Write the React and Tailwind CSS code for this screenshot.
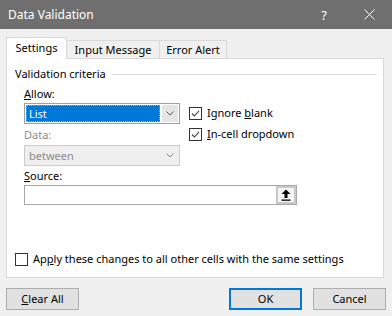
import React from "react";

function Check({ checked }) {
  return (
    <span className="flex h-[13px] w-[13px] items-center justify-center border border-[#333333] bg-white">
      {checked && (
        <svg viewBox="0 0 11 11" className="h-[11px] w-[11px]">
          <path d="M2 5.5 L4.5 8 L9 2.8" fill="none" stroke="#444444" strokeWidth="1.1" />
        </svg>
      )}
    </span>
  );
}

function Chevron({ color = "#555555" }) {
  return (
    <svg viewBox="0 0 8 5" className="h-[5px] w-[8px]">
      <path d="M0.5 0.5 L4 4 L7.5 0.5" fill="none" stroke={color} strokeWidth="1" />
    </svg>
  );
}

function Button({ children, primary }) {
  return (
    <div
      className={
        "flex h-[22px] w-[73px] items-center justify-center bg-[#e1e1e1] " +
        (primary ? "border-2 border-[#0078d7]" : "border border-[#adadad]")
      }
    >
      {children}
    </div>
  );
}

export default function App() {
  return (
    <div
      className="flex h-[316px] w-[392px] flex-col bg-[#f0f0f0] text-[11px] leading-[16px] text-black"
      style={{ fontFamily: '"Segoe UI", "Noto Sans", sans-serif' }}
    >
      {/* Title bar */}
      <div className="flex h-[29px] items-center bg-[#6f6f6f] pl-[8px] text-[12px] text-white">
        <span className="flex-1">Data Validation</span>
        <span className="mr-[37px] text-[13px]">?</span>
        <svg viewBox="0 0 11 11" className="mr-[17px] h-[11px] w-[11px]">
          <path d="M0.5 0.5 L10.5 10.5 M10.5 0.5 L0.5 10.5" stroke="#ffffff" strokeWidth="1" />
        </svg>
      </div>

      <div className="flex flex-col px-[6px]">
        {/* Tabs */}
        <div className="mt-[8px] flex items-end">
          <div className="relative z-10 flex h-[22px] w-[61px] items-center justify-center border border-b-0 border-[#d9d9d9] bg-white pb-[2px]">
            Settings
          </div>
          <div className="flex h-[19px] w-[93px] items-center justify-center border border-l-0 border-[#d9d9d9] bg-[#f0f0f0]">
            Input Message
          </div>
          <div className="flex h-[19px] w-[67px] items-center justify-center border border-l-0 border-[#d9d9d9] bg-[#f0f0f0]">
            Error Alert
          </div>
        </div>

        {/* Panel */}
        <div className="-mt-px flex h-[220px] w-[378px] flex-col border border-[#d9d9d9] bg-white pl-[8px]">
          <div className="mt-[7px] flex items-center pr-[6px]">
            <span>Validation criteria</span>
            <div className="ml-[6px] h-px flex-1 bg-[#dcdcdc]" />
          </div>

          <div className="mt-[4px] flex pl-[9px]">
            {/* Left column */}
            <div className="flex w-[156px] flex-col">
              <span>
                <u>A</u>llow:
              </span>
              <div className="mt-[1px] flex h-[21px] items-center border border-[#a0a0a0] bg-white p-px">
                <div className="flex h-full flex-1 items-center bg-[#0078d7] pl-[3px] text-white outline-1 outline-dotted outline-offset-[-1px] outline-[#e8a040]">
                  List
                </div>
                <div className="ml-[2px] flex h-full w-[16px] items-center justify-center bg-[#e5e5e5]">
                  <Chevron />
                </div>
              </div>
              <span className="mt-[3px] text-[#8c8c8c]">Data:</span>
              <div className="mt-[2px] flex h-[21px] items-center border border-[#cccccc] bg-[#efefef] p-px">
                <div className="flex-1 pl-[3px] text-[#8c8c8c]">between</div>
                <div className="flex h-full w-[16px] items-center justify-center">
                  <Chevron color="#888888" />
                </div>
              </div>
            </div>

            {/* Right column */}
            <div className="ml-[9px] mt-[19px] flex flex-col gap-[5px]">
              <div className="flex items-center gap-[5px]">
                <Check checked />
                <span>
                  Ignore <u>b</u>lank
                </span>
              </div>
              <div className="flex items-center gap-[5px]">
                <Check checked />
                <span>
                  <u>I</u>n-cell dropdown
                </span>
              </div>
            </div>
          </div>

          <div className="mt-[2px] flex flex-col pl-[9px]">
            <span>
              <u>S</u>ource:
            </span>
            <div className="mt-[1px] flex h-[20px] w-[273px] border border-[#a8a8a8] bg-white">
              <div className="flex-1" />
              <div className="flex w-[20px] items-center justify-center border-2 border-[#c8c8c8] bg-[#f5f5f5]">
                <svg viewBox="0 0 10 12" className="h-[12px] w-[10px]">
                  <path d="M5 0.5 L9.5 5 L6.5 5 L6.5 9 L3.5 9 L3.5 5 L0.5 5 Z" fill="#000000" />
                  <rect x="0.5" y="10.5" width="9" height="1.3" fill="#000000" />
                </svg>
              </div>
            </div>
          </div>

          <div className="mt-[46px] flex items-center gap-[5px]">
            <span className="h-[13px] w-[13px] border border-[#333333] bg-white" />
            <span>
              Ap<u>p</u>ly these changes to all other cells with the same settings
            </span>
          </div>
        </div>

        {/* Buttons */}
        <div className="mt-[10px] flex">
          <Button>
            <span>
              <u>C</u>lear All
            </span>
          </Button>
          <div className="flex-1" />
          <Button primary>OK</Button>
          <div className="w-[11px]" />
          <Button>Cancel</Button>
        </div>
      </div>
    </div>
  );
}
